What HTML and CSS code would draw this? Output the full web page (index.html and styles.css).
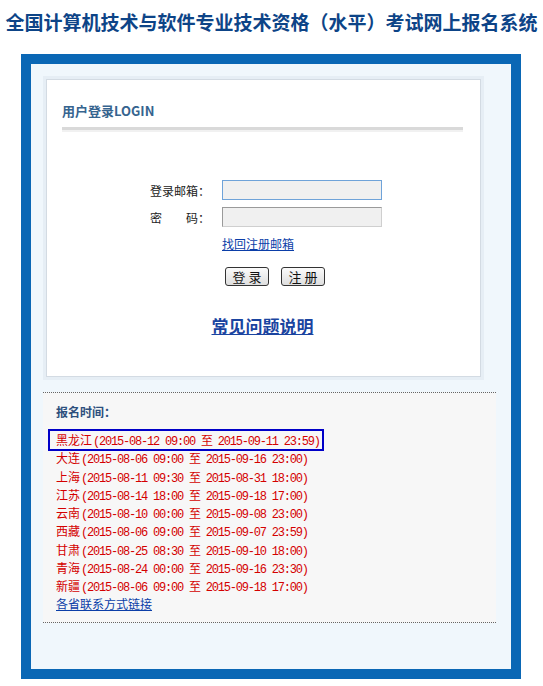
FILE: index.html
```html
<!DOCTYPE html>
<html lang="zh-cn">
<head>
    <meta charset="UTF-8">
    <meta name="viewport" content="width=device-width, initial-scale=1.0">
    <title>全国计算机技术与软件专业技术资格（水平）考试网上报名系统</title>
    <link rel="stylesheet" href="styles.css">
</head>
<body>

    <h1 class="site-title">全国计算机技术与软件专业技术资格（水平）考试网上报名系统</h1>

    <div class="frame">
        <div class="login-box">
            <h2 class="login-title">用户登录LOGIN</h2>
            <div class="login-line"></div>

            <form class="login-form" onsubmit="return false;">
                <label class="form-label" for="email">登录邮箱：</label>
                <input class="form-input focused" type="text" id="email">
                <label class="form-label" for="pwd">密&emsp;&emsp;码：</label>
                <input class="form-input" type="password" id="pwd">
                <span></span>
                <a class="find-link" href="#">找回注册邮箱</a>
                <span></span>
                <div class="form-buttons">
                    <button type="submit">登 录</button>
                    <button type="button">注 册</button>
                </div>
            </form>

            <div class="faq">
                <a href="#">常见问题说明</a>
            </div>
        </div>

        <div class="reg-time">
            <h3>报名时间：</h3>
            <div class="rows">
                <div class="row hl">黑龙江<span class="time">(2015-08-12 09:00 至 2015-09-11 23:59)</span></div>
                <div class="row">大连<span class="time">(2015-08-06 09:00 至 2015-09-16 23:00)</span></div>
                <div class="row">上海<span class="time">(2015-08-11 09:30 至 2015-08-31 18:00)</span></div>
                <div class="row">江苏<span class="time">(2015-08-14 18:00 至 2015-09-18 17:00)</span></div>
                <div class="row">云南<span class="time">(2015-08-10 00:00 至 2015-09-08 23:00)</span></div>
                <div class="row">西藏<span class="time">(2015-08-06 09:00 至 2015-09-07 23:59)</span></div>
                <div class="row">甘肃<span class="time">(2015-08-25 08:30 至 2015-09-10 18:00)</span></div>
                <div class="row">青海<span class="time">(2015-08-24 00:00 至 2015-09-16 23:30)</span></div>
                <div class="row">新疆<span class="time">(2015-08-06 09:00 至 2015-09-18 17:00)</span></div>
                <div class="row"><a href="#">各省联系方式链接</a></div>
            </div>
        </div>
    </div>

</body>
</html>
```

FILE: styles.css
```css
body {
    margin: 0;
    background-color: #fff;
    font-family: "Noto Sans CJK SC", "Liberation Sans", sans-serif;
    font-size: 12px;
    color: #000;
}
a {
    color: #0b3ea8;
    text-decoration: underline;
}
.site-title {
    margin: 0;
    padding-top: 10px;
    font-size: 19px;
    line-height: 24px;
    font-weight: bold;
    color: #0d4487;
    text-align: center;
    white-space: nowrap;
}
.frame {
    margin: 20px 22px 0 21px;
    border: 10px solid #0a67b5;
    background-color: #f0f7fc;
    padding: 15px 30px 46px 15px;
}
.login-box {
    box-sizing: border-box;
    height: 298px;
    background-color: #fff;
    border: 1px solid #d3dbe3;
    box-shadow: 0 0 0 3px #e6eef5;
    padding: 22px 17px 0 15px;
}
.login-title {
    margin: 0;
    font-size: 13px;
    line-height: 18px;
    font-weight: bold;
    color: #36648f;
}
.login-line {
    margin-top: 7px;
    height: 3px;
    background-color: #d9d9d9;
    border-bottom: 2px solid #f1f1f1;
}
.login-form {
    display: grid;
    grid-template-columns: 150px 160px;
    column-gap: 10px;
    row-gap: 7px;
    align-items: center;
    margin-top: 48px;
}
.form-label {
    text-align: right;
    padding-right: 2px;
    font-size: 12px;
    color: #222;
}
.form-input {
    box-sizing: border-box;
    width: 160px;
    height: 20px;
    margin: 0;
    padding: 0 3px;
    background-color: #f0f0f0;
    border: 1px solid #9a9a9a;
    border-bottom-color: #cfcfcf;
    border-right-color: #cfcfcf;
}
.form-input.focused {
    border: 1px solid #6fa3d9;
}
.find-link {
    margin-top: 2px;
    line-height: 16px;
    font-size: 12px;
}
.form-buttons {
    margin-top: 8px;
    padding-left: 3px;
    display: flex;
    gap: 12px;
}
.form-buttons button {
    box-sizing: border-box;
    width: 44px;
    height: 19px;
    padding: 0;
    font-family: inherit;
    font-size: 13px;
    line-height: 15px;
    color: #111;
    background: linear-gradient(#fbfbfb, #dedede);
    border: 1px solid #333;
    border-radius: 3px;
    cursor: pointer;
}
.faq {
    margin-top: 29px;
    text-align: center;
    font-size: 17px;
    line-height: 22px;
    font-weight: bold;
}
.faq a {
    color: #1a44a0;
}
.reg-time {
    margin: 15px -15px 0 -3px;
    background-color: #f7f7f7;
    border-top: 1px dotted #666;
    border-bottom: 1px dotted #666;
    padding: 10px 0 8px 13px;
}
.reg-time h3 {
    margin: 0;
    font-size: 12px;
    line-height: 18px;
    font-weight: bold;
    color: #2d4f7d;
}
.rows {
    margin-top: 10px;
}
.row {
    height: 18.25px;
    line-height: 18.25px;
    color: #d40000;
    white-space: nowrap;
}
.row.hl {
    display: block;
    width: max-content;
    margin-left: -6px;
    padding: 0 2px 0 6px;
    box-shadow: 0 0 0 2px #0000c8;
}
.time {
    font-family: "Liberation Mono", "Noto Sans CJK SC", monospace;
    font-size: 12px;
    line-height: 1;
    letter-spacing: -1.2px;
    padding-left: 1px;
}
```
